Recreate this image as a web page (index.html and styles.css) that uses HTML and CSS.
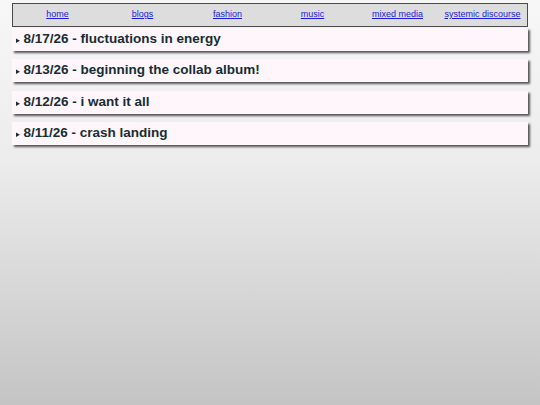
FILE: index.html
```html
<!DOCTYPE html>
<html>
<head>
<meta charset="utf-8">
<link rel="stylesheet" href="styles.css">
</head>
<body>
<nav class="nav">
  <a href="#">home</a>
  <a href="#">blogs</a>
  <a href="#">fashion</a>
  <a href="#">music</a>
  <a href="#">mixed media</a>
  <a href="#">systemic discourse</a>
</nav>
<details class="post"><summary>8/17/26 - fluctuations in energy</summary></details>
<details class="post"><summary>8/13/26 - beginning the collab album!</summary></details>
<details class="post"><summary>8/12/26 - i want it all</summary></details>
<details class="post"><summary>8/11/26 - crash landing</summary></details>
</body>
</html>
```
FILE: styles.css
```css
html {
  min-height: 100%;
  background: linear-gradient(to bottom, #f7f7f7 0%, #ececec 40%, #c4c4c4 100%);
}
body {
  margin: 0;
  padding: 3px 12px 0 12px;
  min-height: 405px;
  box-sizing: border-box;
  font-family: "Liberation Sans", Arial, sans-serif;
}
.nav {
  display: grid;
  grid-template-columns: repeat(6, 1fr);
  border: 1px solid #4a4a4a;
  background: #dddddd;
  padding: 0 2px 2px 2px;
  height: 22px;
  box-sizing: border-box;
  height: 24px;
  align-items: center;
  margin-bottom: 1px;
}
.nav a {
  font-size: 9px;
  color: #1a1ad8;
  text-align: center;
}
.post {
  background: #fff6fc;
  box-shadow: 2px 2px 2px #555;
  margin-bottom: 8.4px;
  height: 23px;
  box-sizing: border-box;
}
.post summary {
  font-weight: bold;
  font-size: 13.5px;
  color: #162d33;
  line-height: 21px;
  padding-left: 4px;
  cursor: pointer;
}
.post summary::marker {
  font-size: 7px;
}
```
